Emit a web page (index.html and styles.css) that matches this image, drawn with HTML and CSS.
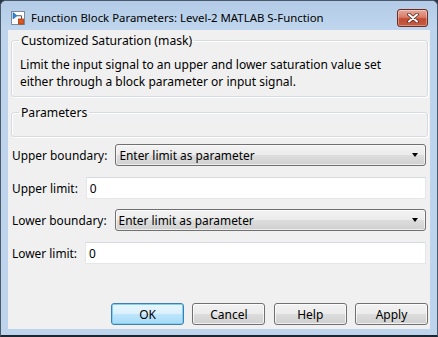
FILE: index.html
```html
<!DOCTYPE html>
<html>
<head>
<meta charset="utf-8">
<link rel="stylesheet" href="styles.css">
</head>
<body>
<div class="window">
  <div class="titlebar">
    <svg class="app-icon" width="14" height="14" viewBox="0 0 14 14">
      <rect x="0.5" y="0.5" width="13" height="13" fill="#fff" stroke="#7d8a99"/>
      <path d="M2 1.5 L2 8 L6 4.75 Z" fill="#2f86d6" stroke="#1a5ea8" stroke-width="0.6"/>
      <path d="M6 4.75 H10.5 V8" fill="none" stroke="#555" stroke-width="1"/>
      <rect x="7.5" y="8" width="5" height="5" fill="#e2571e" stroke="#a33a0f" stroke-width="0.8"/>
    </svg>
    <span class="title">Function Block Parameters: Level-2 MATLAB S-Function</span>
    <div class="close">
      <svg width="14" height="10" viewBox="0 0 14 10">
        <path d="M3 1.5 L11 8.5 M11 1.5 L3 8.5" stroke="#5a2a22" stroke-width="3.6" stroke-linecap="round"/>
        <path d="M3 1.5 L11 8.5 M11 1.5 L3 8.5" stroke="#fff" stroke-width="2" stroke-linecap="round"/>
      </svg>
    </div>
  </div>
  <div class="client">
    <fieldset class="group desc">
      <legend>Customized Saturation (mask)</legend>
      <p>Limit the input signal to an upper and lower saturation value set<br>either through a block parameter or input signal.</p>
    </fieldset>
    <fieldset class="group params">
      <legend>Parameters</legend>
    </fieldset>
    <div class="form">
      <div class="row">
        <span class="label">Upper boundary:</span>
        <div class="select"><span>Enter limit as parameter</span><span class="arrow"></span></div>
      </div>
      <div class="row">
        <span class="label">Upper limit:</span>
        <div class="input">0</div>
      </div>
      <div class="row">
        <span class="label">Lower boundary:</span>
        <div class="select"><span>Enter limit as parameter</span><span class="arrow"></span></div>
      </div>
      <div class="row">
        <span class="label">Lower limit:</span>
        <div class="input">0</div>
      </div>
    </div>
    <div class="buttons">
      <div class="btn default">OK</div>
      <div class="btn">Cancel</div>
      <div class="btn">Help</div>
      <div class="btn">Apply</div>
    </div>
  </div>
</div>
</body>
</html>
```
FILE: styles.css
```css
* { box-sizing: border-box; }
html, body { margin: 0; padding: 0; }
body {
  width: 438px;
  height: 337px;
  background: #2a3442;
  font-family: "Noto Sans", "Open Sans", sans-serif;
  font-size: 11.9px;
  color: #000;
}
.window {
  width: 438px;
  height: 337px;
  border: 1px solid #4b5a6b;
  border-bottom: 2px solid #1d2530;
  border-radius: 6px 6px 0 0;
  background: #bed4ec;
  display: flex;
  flex-direction: column;
  overflow: hidden;
}
.titlebar {
  height: 29px;
  flex: none;
  display: flex;
  align-items: center;
  padding: 0 9px 0 10px;
  background: linear-gradient(#b3cbe7, #c0d6ee);
}
.app-icon { flex: none; margin-top: 5px; }
.title {
  margin-left: 6px;
  font-size: 11.4px;
  color: #000;
  flex: 1;
  margin-top: 3px;
}
.close {
  width: 31px;
  height: 18px;
  margin-top: 4px;
  border: 1px solid #6e2b1f;
  border-radius: 3px;
  background: linear-gradient(#e7a899 0%, #d97c69 45%, #c14a33 55%, #c75a41 100%);
  box-shadow: inset 0 0 0 1px rgba(255,255,255,0.35);
  display: flex;
  align-items: center;
  justify-content: center;
}
.client {
  flex: 1;
  margin: 0 7px 6px 7px;
  background: #f0f0f0;
  display: flex;
  flex-direction: column;
  padding: 3px 2px 4px 3px;
}
.group {
  margin: 0;
  border: 1px solid #d5dbe0;
  border-radius: 3px;
  box-shadow: inset 1px 1px 0 #fff, 1px 1px 0 #fff;
  padding: 0 8px;
}
.group legend {
  padding: 0 2px;
  margin-left: -1px;
  line-height: 15px;
  font-size: 12.2px;
}
.desc p {
  margin: 8px 0 6px 0;
  line-height: 17px;
  font-size: 12px;
}
.params {
  margin-top: 8px;
  height: 32px;
}
.form {
  margin-top: 7px;
  padding: 0 2px 0 1px;
  display: flex;
  flex-direction: column;
  gap: 10.5px;
}
.row {
  display: flex;
  align-items: center;
  height: 22px;
}
.label {
  flex: none;
  margin-right: 8px;
}
.select {
  flex: 1;
  height: 22px;
  border: 1px solid #707070;
  border-radius: 3px;
  background: linear-gradient(#f3f3f3 0%, #ebebeb 50%, #dddddd 51%, #d0d0d0 100%);
  box-shadow: inset 0 0 0 1px rgba(255,255,255,0.6);
  display: flex;
  align-items: center;
  padding: 0 7px 0 3px;
}
.select span:first-child { flex: 1; }
.arrow {
  width: 0; height: 0;
  border-left: 3.5px solid transparent;
  border-right: 3.5px solid transparent;
  border-top: 4px solid #000;
}
.input {
  flex: 1;
  height: 22px;
  background: #fff;
  border: 1px solid #e3e7ea;
  border-top-color: #d6dade;
  padding: 0 3px;
  display: flex;
  align-items: center;
}
.buttons {
  margin-top: auto;
  display: flex;
  justify-content: flex-end;
  gap: 8.3px;
}
.btn {
  width: 73px;
  height: 22px;
  border: 1px solid #707070;
  border-radius: 3px;
  background: linear-gradient(#f2f2f2 0%, #ebebeb 50%, #dddddd 51%, #cfcfcf 100%);
  box-shadow: inset 0 0 0 1px rgba(255,255,255,0.7);
  display: flex;
  align-items: center;
  justify-content: center;
  font-size: 12px;
}
.btn.default {
  border-color: #3c7fb1;
  background: linear-gradient(#eaf6fd 0%, #d9f0fc 50%, #bee6fd 51%, #a7d9f5 100%);
  box-shadow: inset 0 0 0 1px #7fd1f4;
}
```
